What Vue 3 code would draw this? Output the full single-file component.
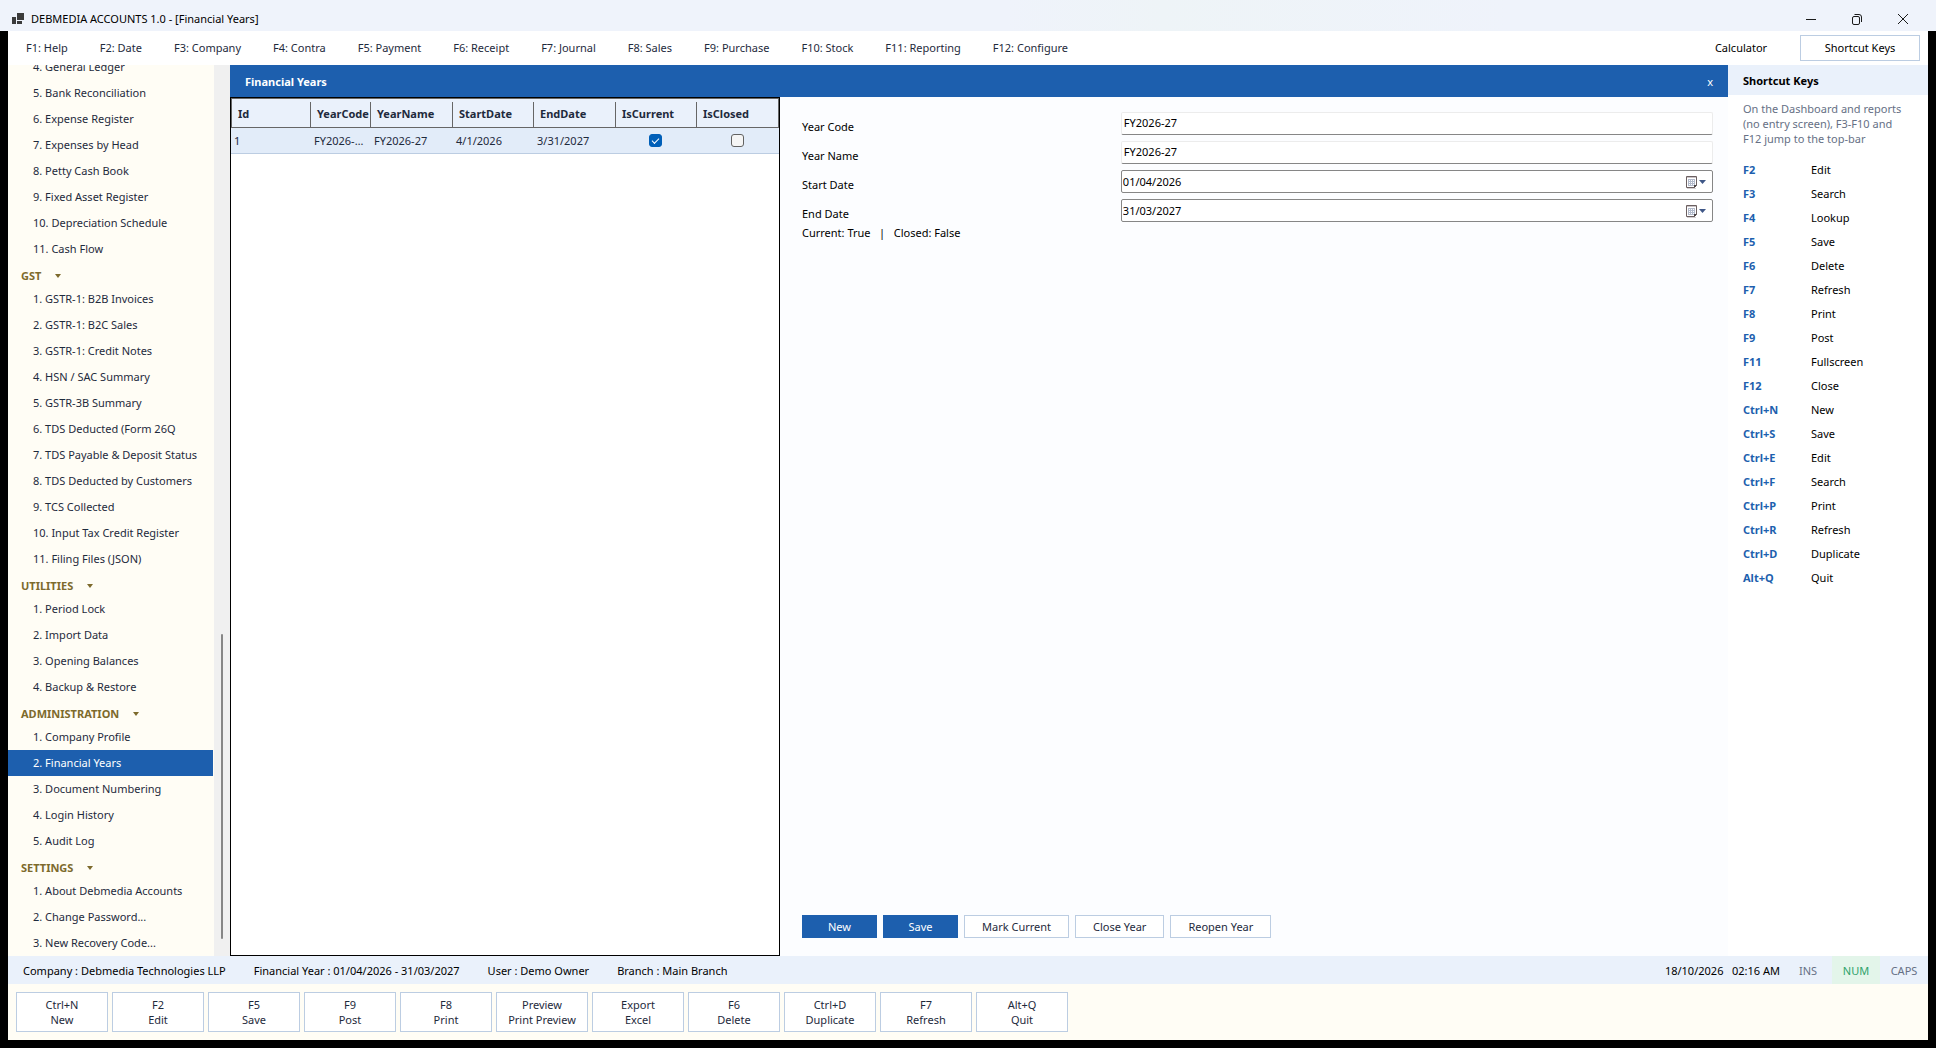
<script setup>
import { ref } from 'vue'

const menu = [
  'F1: Help', 'F2: Date', 'F3: Company', 'F4: Contra', 'F5: Payment', 'F6: Receipt',
  'F7: Journal', 'F8: Sales', 'F9: Purchase', 'F10: Stock', 'F11: Reporting', 'F12: Configure'
]

const sections = [
  {
    title: '',
    items: [
      '4. General Ledger', '5. Bank Reconciliation', '6. Expense Register', '7. Expenses by Head',
      '8. Petty Cash Book', '9. Fixed Asset Register', '10. Depreciation Schedule', '11. Cash Flow'
    ]
  },
  {
    title: 'GST',
    items: [
      '1. GSTR-1: B2B Invoices', '2. GSTR-1: B2C Sales', '3. GSTR-1: Credit Notes',
      '4. HSN / SAC Summary', '5. GSTR-3B Summary', '6. TDS Deducted (Form 26Q',
      '7. TDS Payable & Deposit Status', '8. TDS Deducted by Customers', '9. TCS Collected',
      '10. Input Tax Credit Register', '11. Filing Files (JSON)'
    ]
  },
  { title: 'UTILITIES', items: ['1. Period Lock', '2. Import Data', '3. Opening Balances', '4. Backup & Restore'] },
  {
    title: 'ADMINISTRATION',
    items: ['1. Company Profile', '2. Financial Years', '3. Document Numbering', '4. Login History', '5. Audit Log']
  },
  { title: 'SETTINGS', items: ['1. About Debmedia Accounts', '2. Change Password...', '3. New Recovery Code...'] }
]
const active = ref('2. Financial Years')

const columns = ['Id', 'YearCode', 'YearName', 'StartDate', 'EndDate', 'IsCurrent', 'IsClosed']
const years = [
  { id: 1, code: 'FY2026-27', name: 'FY2026-27', start: '4/1/2026', end: '3/31/2027', current: true, closed: false }
]

const form = ref({ code: 'FY2026-27', name: 'FY2026-27', start: '01/04/2026', end: '31/03/2027' })
const dateFields = [
  { key: 'start', label: 'Start Date' },
  { key: 'end', label: 'End Date' }
]

const shortcuts = [
  ['F2', 'Edit'], ['F3', 'Search'], ['F4', 'Lookup'], ['F5', 'Save'], ['F6', 'Delete'], ['F7', 'Refresh'],
  ['F8', 'Print'], ['F9', 'Post'], ['F11', 'Fullscreen'], ['F12', 'Close'], ['Ctrl+N', 'New'],
  ['Ctrl+S', 'Save'], ['Ctrl+E', 'Edit'], ['Ctrl+F', 'Search'], ['Ctrl+P', 'Print'],
  ['Ctrl+R', 'Refresh'], ['Ctrl+D', 'Duplicate'], ['Alt+Q', 'Quit']
]

const status = [
  'Company : Debmedia Technologies LLP', 'Financial Year : 01/04/2026 - 31/03/2027',
  'User : Demo Owner', 'Branch : Main Branch'
]

const tools = [
  ['Ctrl+N', 'New'], ['F2', 'Edit'], ['F5', 'Save'], ['F9', 'Post'], ['F8', 'Print'],
  ['Preview', 'Print Preview'], ['Export', 'Excel'], ['F6', 'Delete'], ['Ctrl+D', 'Duplicate'],
  ['F7', 'Refresh'], ['Alt+Q', 'Quit']
]
</script>

<template>
  <div class="window">
    <header class="titlebar">
      <svg class="app-icon" width="12" height="12" viewBox="0 0 12 12" aria-hidden="true">
        <path d="M5 0h7v7H5zM0 4h4v7H0zM5 8h5v3H5z" fill="#3b3b3b" />
      </svg>
      <h1>DEBMEDIA ACCOUNTS 1.0 - [Financial Years]</h1>
      <div class="controls">
        <button type="button" aria-label="Minimize">
          <svg width="12" height="12" viewBox="0 0 12 12"><path d="M1 6.500h10" /></svg>
        </button>
        <button type="button" aria-label="Restore">
          <svg width="12" height="12" viewBox="0 0 12 12">
            <rect x="1.500" y="3.500" width="7" height="8" rx="1.500" />
            <path d="M3.500 1.500h4.500a2.500 2.500 0 0 1 2.500 2.500v5" />
          </svg>
        </button>
        <button type="button" aria-label="Close">
          <svg width="12" height="12" viewBox="0 0 12 12"><path d="M1 1l10 10M11 1L1 11" /></svg>
        </button>
      </div>
    </header>

    <div class="frame">
      <nav class="menubar">
        <button v-for="m in menu" :key="m" type="button" class="menu-item">{{ m }}</button>
        <button type="button" class="calculator">Calculator</button>
        <button type="button" class="keys-toggle">Shortcut Keys</button>
      </nav>

      <div class="workspace">
        <aside class="sidebar">
          <div class="tree">
            <section v-for="s in sections" :key="s.title">
              <button v-if="s.title" type="button" class="group">{{ s.title }}<i></i></button>
              <a
                v-for="item in s.items"
                :key="item"
                href="#"
                :class="{ active: item === active }"
                @click.prevent="active = item"
              >{{ item }}</a>
            </section>
          </div>
          <div class="scrollbar"><span></span></div>
        </aside>

        <main class="screen">
          <div class="screen-title">
            <h2>Financial Years</h2>
            <button type="button" aria-label="Close screen">x</button>
          </div>
          <div class="split">
            <div class="grid">
              <table>
                <colgroup>
                  <col v-for="c in columns" :key="c" :class="'c-' + c.toLowerCase()" />
                </colgroup>
                <thead>
                  <tr><th v-for="c in columns" :key="c"><span>{{ c }}</span></th></tr>
                </thead>
                <tbody>
                  <tr v-for="y in years" :key="y.id">
                    <td>{{ y.id }}</td>
                    <td>{{ y.code }}</td>
                    <td>{{ y.name }}</td>
                    <td>{{ y.start }}</td>
                    <td>{{ y.end }}</td>
                    <td class="check"><input type="checkbox" :checked="y.current" aria-label="IsCurrent" /></td>
                    <td class="check"><input type="checkbox" :checked="y.closed" aria-label="IsClosed" /></td>
                  </tr>
                </tbody>
              </table>
            </div>

            <form class="editor" @submit.prevent>
              <div class="field">
                <label for="year-code">Year Code</label>
                <input id="year-code" v-model="form.code" type="text" class="text" />
              </div>
              <div class="field">
                <label for="year-name">Year Name</label>
                <input id="year-name" v-model="form.name" type="text" class="text" />
              </div>
              <div v-for="f in dateFields" :key="f.key" class="field">
                <label :for="f.key">{{ f.label }}</label>
                <div class="date">
                  <input :id="f.key" v-model="form[f.key]" type="text" />
                  <button type="button" :aria-label="'Pick ' + f.label">
                    <svg width="22" height="14" viewBox="0 0 22 14">
                      <path d="M2 13.500h9" stroke="#d4d0d2" fill="none" />
                      <path d="M1.500 1.500h10v9l-2 2h-8z" fill="#fff" stroke="#6b5f60" />
                      <path d="M2 2.500h9" stroke="#c9c3c6" />
                      <path d="M3 4h7v7H3z" fill="#b3bbcc" />
                      <path d="M4 5.500h6M4 7.500h6M4 9.500h6" stroke="#fff" stroke-dasharray="1 1" />
                      <path d="M9 13v-3h3z" fill="#4a4446" />
                      <path d="M14 5h7l-3.500 4z" fill="#3f5787" />
                    </svg>
                  </button>
                </div>
              </div>
              <p class="flags">Current: True &nbsp; | &nbsp; Closed: False</p>
              <div class="actions">
                <button type="button" class="primary">New</button>
                <button type="submit" class="primary">Save</button>
                <button type="button">Mark Current</button>
                <button type="button">Close Year</button>
                <button type="button">Reopen Year</button>
              </div>
            </form>
          </div>
        </main>

        <aside class="shortcuts">
          <h2>Shortcut Keys</h2>
          <p>On the Dashboard and reports (no entry screen), F3-F10 and F12 jump to the top-bar</p>
          <dl>
            <div v-for="s in shortcuts" :key="s[0]"><dt>{{ s[0] }}</dt><dd>{{ s[1] }}</dd></div>
          </dl>
        </aside>
      </div>

      <div class="status">
        <span v-for="s in status" :key="s">{{ s }}</span>
        <span class="clock">18/10/2026 &nbsp; 02:16 AM</span>
        <span class="lock">INS</span>
        <span class="lock on">NUM</span>
        <span class="lock">CAPS</span>
      </div>

      <footer class="toolbar">
        <button v-for="t in tools" :key="t[0]" type="button">{{ t[0] }}<br />{{ t[1] }}</button>
      </footer>
    </div>
  </div>
</template>

<style>
body {
  margin: 0;
  background: #000;
}
</style>

<style scoped>
.window {
  display: flex;
  flex-direction: column;
  height: 100vh;
  box-sizing: border-box;
  padding-bottom: 8px;
  background: #000;
  color: #000;
  font: 11px/16px "Noto Sans", "Open Sans", sans-serif;
}
.window *,
.window *::before {
  box-sizing: border-box;
}
button,
input {
  margin: 0;
  padding: 0;
  border: 0;
  border-radius: 0;
  background: none;
  color: inherit;
  font: inherit;
}
h1,
h2,
p,
dl,
dd {
  margin: 0;
}
h1,
h2 {
  font-size: 11px;
}

.titlebar {
  display: flex;
  align-items: center;
  flex: none;
  height: 31px;
  padding: 7px 0 0 12px;
  background: linear-gradient(90deg, #eff3fb 52%, #eef4f7 60%, #eff3fb 78%);
}
.app-icon {
  margin-right: 7px;
}
h1 {
  font-weight: 400;
}
.controls {
  display: flex;
  margin: 0 10px 0 auto;
}
.controls button {
  display: flex;
  align-items: center;
  justify-content: center;
  width: 46px;
  height: 24px;
}
.controls svg {
  fill: none;
  stroke: #1a1a1a;
}

.frame {
  display: flex;
  flex-direction: column;
  flex: 1;
  min-height: 0;
  margin: 0 8px;
}

.menubar {
  display: flex;
  align-items: center;
  flex: none;
  height: 34px;
  padding: 0 8px 0 2px;
  background: #fff;
}
.menu-item {
  padding: 0 16px;
  color: #1e2a3c;
  white-space: nowrap;
}
.calculator {
  width: 118px;
  margin-left: auto;
}
.keys-toggle {
  width: 120px;
  height: 26px;
  border: 1px solid #bccde2;
}

.workspace {
  display: flex;
  flex: 1;
  min-height: 0;
}
.sidebar {
  display: flex;
  flex: none;
  width: 222px;
  background: #fffdf5;
}
.tree {
  display: flex;
  flex-direction: column;
  justify-content: flex-end;
  flex: 1;
  overflow: hidden;
  padding-right: 1px;
}
.tree a {
  display: block;
  padding-left: 25px;
  color: #1e2a3c;
  line-height: 26px;
  text-decoration: none;
  white-space: nowrap;
}
.tree a.active {
  background: #1d5fae;
  color: #fff;
}
.group {
  display: flex;
  align-items: center;
  gap: 14px;
  height: 24px;
  padding: 3px 0 0 13px;
  color: #7d6a2c;
  font-weight: 700;
}
.group i {
  border: 3px solid transparent;
  border-top: 4px solid #7d6a2c;
  border-bottom: 0;
}
.scrollbar {
  display: flex;
  flex-direction: column;
  justify-content: flex-end;
  width: 16px;
  padding: 17px 7px;
  background: #f0f0f0;
}
.scrollbar span {
  flex: 0 1 305px;
  border-radius: 1px;
  background: #868686;
}

.screen {
  display: flex;
  flex-direction: column;
  flex: 1;
  min-width: 0;
  background: #fcfdff;
}
.screen-title {
  display: flex;
  align-items: center;
  justify-content: space-between;
  flex: none;
  height: 32px;
  padding: 2px 15px 0;
  background: #1d5fae;
  color: #fff;
}
.split {
  display: flex;
  flex: 1;
  min-height: 0;
}
.grid {
  flex: none;
  width: 550px;
  border: 1px solid #000;
  background: #fff;
}
table {
  width: 100%;
  border-spacing: 0;
  table-layout: fixed;
  color: #1e2a3c;
}
.c-id {
  width: 79px;
}
.c-yearcode {
  width: 60px;
}
.c-yearname,
.c-enddate {
  width: 82px;
}
.c-startdate,
.c-iscurrent {
  width: 81px;
}
th {
  height: 30px;
  padding: 2px 0 0;
  border: solid #666;
  border-width: 1px 0;
  background: #eaf1fb;
  text-align: left;
}
th:first-child {
  border-left-width: 1px;
}
th:last-child {
  border-right-width: 1px;
}
th span {
  display: block;
  padding: 0 0 2px 6px;
  border-left: 1px solid #666;
  line-height: 23px;
}
th:first-child span {
  border-left: 0;
}
td {
  height: 26px;
  overflow: hidden;
  padding: 0 5px 0 4px;
  border-bottom: 1px solid #bccde2;
  background: #e2ecf9;
  text-overflow: ellipsis;
  white-space: nowrap;
}
td:first-child {
  padding-left: 3px;
}
.check {
  text-align: center;
}
.check input {
  display: block;
  width: 13px;
  height: 13px;
  margin: 0 auto;
  border: 1px solid #626262;
  border-radius: 3px;
  background: #f5f5f5;
  appearance: none;
}
.check input:checked {
  border-color: #005fb8;
  background: #005fb8;
}
.check input:checked::before {
  content: "";
  display: block;
  width: 7px;
  height: 4px;
  margin: 3px 2px;
  border: solid #fff;
  border-width: 0 0 1px 1px;
  transform: rotate(-45deg);
}

.editor {
  display: flex;
  flex-direction: column;
  flex: 1;
  min-width: 0;
  padding: 15px 15px 18px 22px;
}
.field {
  display: grid;
  grid-template-columns: 35% 65%;
  height: 29px;
}
.field label {
  padding-top: 7px;
}
.text,
.date {
  height: 23px;
  border: 1px solid #868686;
  border-radius: 2px;
  background: #fff;
}
.text {
  padding: 0 2px 3px;
  border-color: #ececec #ececec #868686;
}
.date {
  display: flex;
}
.date input {
  flex: 1;
  padding-left: 1px;
}
.date button {
  display: flex;
  align-items: center;
  padding-right: 5px;
}
.flags {
  margin-top: -3px;
}
.actions {
  display: flex;
  gap: 6px;
  margin-top: auto;
}
.actions button {
  height: 23px;
  padding: 1px 17px 0;
  border: 1px solid #bccde2;
  background: #fff;
  color: #1e2a3c;
}
.actions .primary {
  width: 75px;
  padding: 0;
  border-color: #1d5fae;
  background: #1d5fae;
  color: #fff;
}

.shortcuts {
  flex: none;
  width: 200px;
  background: #fff;
}
.shortcuts h2 {
  padding: 2px 0 0 15px;
  background: #eaf1fb;
  line-height: 28px;
}
.shortcuts p {
  padding: 6px 15px 0;
  color: #667085;
  line-height: 15px;
}
.shortcuts dl {
  padding: 12px 15px 0;
}
.shortcuts dl div {
  display: flex;
  line-height: 24px;
}
.shortcuts dt {
  width: 68px;
  color: #1d5fae;
  font-weight: 700;
}

.status {
  display: flex;
  flex: none;
  padding-left: 15px;
  background: #eaf1fb;
  line-height: 26px;
  white-space: nowrap;
}
.status span {
  margin-right: 28px;
  padding-top: 2px;
}
.status .clock {
  margin: 0 4px 0 auto;
}
.status .lock {
  width: 48px;
  margin: 0;
  color: #667085;
  text-align: center;
}
.status .on {
  background: #e3f5ea;
  color: #2fa36b;
}

.toolbar {
  display: flex;
  flex: none;
  gap: 4px;
  padding: 8px;
  background: #fffdf5;
}
.toolbar button {
  width: 92px;
  height: 40px;
  border: 1px solid #bccde2;
  background: #fff;
  color: #1e2a3c;
  line-height: 15px;
}
</style>
